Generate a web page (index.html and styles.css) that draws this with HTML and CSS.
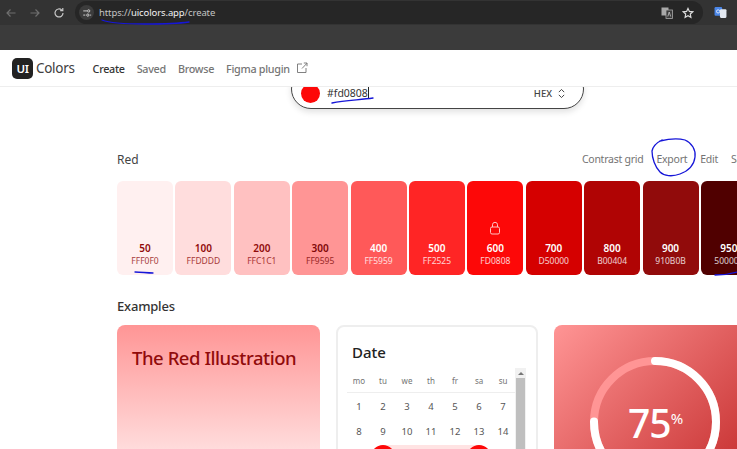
FILE: index.html
```html
<!DOCTYPE html>
<html lang="en">
<head>
    <meta charset="UTF-8">
    <meta name="viewport" content="width=device-width, initial-scale=1.0">
    <title>UI Colors</title>
    <link rel="stylesheet" href="styles.css">
</head>
<body>
    <div class="toolbar">
        <div class="toolbar-nav">
            <svg class="tool-icon" viewBox="0 0 12 12"><path d="M10.5 6H2M5.5 2.5 2 6l3.5 3.5" fill="none" stroke="#6f6f6f" stroke-width="1.2"/></svg>
            <svg class="tool-icon" viewBox="0 0 12 12"><path d="M1.5 6H10M6.5 2.5 10 6l-3.5 3.5" fill="none" stroke="#6f6f6f" stroke-width="1.2"/></svg>
            <svg class="tool-icon" viewBox="0 0 12 12"><path d="M10 6a4 4 0 1 1-1.2-2.9M9.8 1v2.6H7.2" fill="none" stroke="#c8c8c8" stroke-width="1.2"/></svg>
        </div>
        <div class="address">
            <span class="site-info">
                <svg viewBox="0 0 12 12"><path d="M1.5 3.5h4.5M1.5 8.5h2.5" fill="none" stroke="#ddd" stroke-width="1.1"/><circle cx="8" cy="3.5" r="1.4" fill="none" stroke="#ddd"/><circle cx="7" cy="8.5" r="1.4" fill="none" stroke="#ddd"/><path d="M9.5 8.5h1.5" stroke="#ddd"/></svg>
            </span>
            <span class="url">https://<b>uicolors.app</b>/create</span>
            <svg class="translate-icon" viewBox="0 0 12 12"><rect x="0.5" y="0.5" width="7" height="8" fill="#a8a8a8"/><rect x="5" y="3" width="6.5" height="8.5" fill="#3a3a3a" stroke="#a8a8a8" stroke-width="0.8"/><path d="M6.8 9.5 8.2 5l1.5 4.5" fill="none" stroke="#c8c8c8" stroke-width="0.8"/></svg>
            <svg class="star-icon" viewBox="0 0 12 12"><path d="m6 1.4 1.4 3 3.3.4-2.4 2.2.6 3.3L6 8.7l-2.9 1.6.6-3.3-2.4-2.2 3.3-.4z" fill="none" stroke="#ddd" stroke-width="1.2"/></svg>
        </div>
        <svg class="ext-icon" viewBox="0 0 12 12"><rect x="0.5" y="1" width="7" height="8" rx="1" fill="#4a86e8"/><rect x="5.5" y="3" width="6" height="8" rx="1" fill="#e4e9f2"/><circle cx="3.8" cy="5" r="1.5" fill="none" stroke="#fff" stroke-width="0.7"/></svg>
    </div>
    <div class="tabstrip"></div>

    <nav class="nav">
        <a class="logo"><span class="logo-mark">UI</span> Colors</a>
        <a class="nav-link active">Create</a>
        <a class="nav-link">Saved</a>
        <a class="nav-link">Browse</a>
        <a class="nav-link">Figma plugin
            <svg class="open-icon" viewBox="0 0 12 12"><path d="M6 2H1.5v8.5H10V6M6 6.5 11 1.2M7.8 1H11v3.2" fill="none" stroke="#737373" stroke-width="0.9"/></svg>
        </a>
    </nav>

    <main class="content">
        <div class="picker">
            <span class="picker-dot"></span>
            <span class="picker-value">#fd0808<i class="caret"></i></span>
            <span class="picker-format">HEX
                <svg viewBox="0 0 10 12"><path d="M2 4.5 5 1.5l3 3M2 7.5l3 3 3-3" fill="none" stroke="#444" stroke-width="1.1"/></svg>
            </span>
        </div>

        <div class="palette-head">
            <h2>Red</h2>
            <div class="palette-actions">
                <a>Contrast grid</a>
                <a>Export</a>
                <a>Edit</a>
                <a>Save</a>
            </div>
        </div>

        <div class="swatches">
            <div class="swatch s50"><b>50</b><span>FFF0F0</span></div>
            <div class="swatch s100"><b>100</b><span>FFDDDD</span></div>
            <div class="swatch s200"><b>200</b><span>FFC1C1</span></div>
            <div class="swatch s300"><b>300</b><span>FF9595</span></div>
            <div class="swatch s400"><b>400</b><span>FF5959</span></div>
            <div class="swatch s500"><b>500</b><span>FF2525</span></div>
            <div class="swatch s600">
                <svg class="lock" viewBox="0 0 12 14"><rect x="1.5" y="6" width="9" height="7" rx="1.5" fill="none" stroke="#ffc1c1"/><path d="M3.5 6V3.8a2.5 2.5 0 0 1 5 0V6" fill="none" stroke="#ffc1c1"/></svg>
                <b>600</b><span>FD0808</span>
            </div>
            <div class="swatch s700"><b>700</b><span>D50000</span></div>
            <div class="swatch s800"><b>800</b><span>B00404</span></div>
            <div class="swatch s900"><b>900</b><span>910B0B</span></div>
            <div class="swatch s950"><b>950</b><span>500000</span></div>
        </div>

        <h3 class="examples-title">Examples</h3>

        <div class="examples">
            <div class="card card-illustration">
                <h4>The Red Illustration</h4>
            </div>
            <div class="card card-date">
                <h4>Date</h4>
                <div class="calendar-wrap">
                    <div class="calendar">
                        <div class="weekdays">
                            <span>mo</span><span>tu</span><span>we</span><span>th</span><span>fr</span><span>sa</span><span>su</span>
                        </div>
                        <div class="days">
                            <span>1</span><span>2</span><span>3</span><span>4</span><span>5</span><span>6</span><span>7</span>
                            <span>8</span><span>9</span><span>10</span><span>11</span><span>12</span><span>13</span><span>14</span>
                        </div>
                        <div class="range">
                            <i class="range-end"></i>
                            <i class="range-end"></i>
                        </div>
                    </div>
                    <div class="scrollbar"><span class="scroll-up"></span><span class="scroll-thumb"></span></div>
                </div>
            </div>
            <div class="card card-progress">
                <svg class="ring" viewBox="0 0 132 132">
                    <circle cx="66" cy="66" r="61" fill="none" stroke="#ff9595" stroke-width="8"/>
                    <circle cx="66" cy="66" r="61" fill="none" stroke="#fff" stroke-width="8" stroke-linecap="round" stroke-dasharray="287.5 400" transform="rotate(-90 66 66)"/>
                </svg>
                <div class="progress-value">75<sup>%</sup></div>
            </div>
        </div>
    </main>

    <!-- pen marks drawn on top of the screenshot -->
    <svg class="ink" viewBox="0 0 737 449">
        <path d="M102 20C112 24 130 24 145 24S175 24 189 22"/>
        <path d="M332 103C345 100 360 100 373 98"/>
        <path d="M660 141C668 139 678 138 685 140C692 143 696 150 695 157C694 166 688 171 680 174C672 177 664 176 660 172C655 167 652 158 652 151C653 146 656 143 662 140"/>
        <path d="M135 272C141 272 147 273 153 273"/>
        <path d="M715 275C723 275 730 274 737 272"/>
    </svg>
</body>
</html>
```

FILE: styles.css
```css
* {
    box-sizing: border-box;
}

html, body {
    height: 100%;
    margin: 0;
    overflow: hidden;
    background: #fff;
}

body {
    position: relative;
    font-family: "Noto Sans", "Open Sans", sans-serif;
    color: #333;
}

/* browser chrome */
.toolbar {
    display: flex;
    align-items: center;
    height: 25px;
    padding-left: 5px;
    background: #333;
}

.toolbar-nav {
    display: flex;
    gap: 12px;
    width: 70px;
}

.tool-icon {
    width: 12px;
    height: 12px;
}

.address {
    display: flex;
    align-items: center;
    width: 628px;
    height: 23px;
    padding: 0 9px 0 4px;
    border-radius: 12px;
    background: #262626;
}

.site-info {
    display: flex;
    align-items: center;
    justify-content: center;
    width: 15px;
    height: 15px;
    margin-right: 5px;
    border-radius: 50%;
    background: #3c3c3c;
}

.site-info svg {
    width: 10px;
    height: 10px;
}

.url {
    flex: 1;
    font-size: 9.5px;
    letter-spacing: -0.1px;
    color: #c4c4c4;
}

.url b {
    font-weight: 400;
    color: #f2f2f2;
}

.translate-icon {
    width: 12px;
    height: 12px;
    margin-right: 9px;
}

.star-icon {
    width: 12px;
    height: 12px;
}

.ext-icon {
    width: 13px;
    height: 13px;
    margin-left: 11px;
}

.tabstrip {
    height: 25px;
    background: #3b3b3b;
}

/* site nav */
.nav {
    position: relative;
    z-index: 2;
    display: flex;
    align-items: center;
    height: 37px;
    padding-left: 12px;
    background: #fff;
    border-bottom: 1px solid #eee;
    font-size: 10.8px;
    letter-spacing: -0.3px;
}

.logo {
    display: flex;
    align-items: center;
    gap: 3px;
    margin-right: 18px;
    font-size: 13.5px;
    color: #404040;
}

.logo-mark {
    display: flex;
    align-items: center;
    justify-content: center;
    width: 21px;
    height: 21px;
    border-radius: 5px;
    background: #222;
    color: #fff;
    font-size: 11.5px;
    font-weight: 600;
}

.nav-link {
    display: flex;
    align-items: center;
    margin-right: 12px;
    font-weight: 500;
    color: #757575;
}

.nav-link.active {
    color: #333;
}

.open-icon {
    width: 12px;
    height: 12px;
    margin-left: 6px;
}

/* page body, scrolled a little so the picker is cut off by the nav */
.content {
    padding-left: 117px;
}

.picker {
    display: flex;
    align-items: center;
    width: 293px;
    height: 40px;
    margin-top: -18px;
    margin-left: 174px;
    padding: 8px 17px 0 9px;
    border: 1px solid #444;
    border-radius: 20px;
    background: #fff;
    box-shadow: 0 3px 6px rgba(0, 0, 0, 0.12);
    font-size: 10.5px;
}

.picker-dot {
    width: 19px;
    height: 19px;
    margin-right: 7px;
    border-radius: 50%;
    background: #fd0808;
}

.picker-value {
    flex: 1;
    color: #333;
}

.caret {
    display: inline-block;
    width: 1px;
    height: 12px;
    vertical-align: -2px;
    background: #222;
}

.picker-format {
    display: flex;
    align-items: center;
    gap: 5px;
    font-size: 9.5px;
    font-weight: 500;
    color: #444;
}

.picker-format svg {
    width: 9px;
    height: 11px;
}

.palette-head {
    display: flex;
    justify-content: space-between;
    align-items: center;
    width: 636px;
    height: 20px;
    margin-top: 40px;
}

.palette-head h2 {
    margin: 0;
    font-size: 12px;
    font-weight: 400;
    color: #444;
}

.palette-actions {
    display: flex;
    gap: 13px;
    font-size: 10.5px;
    letter-spacing: -0.25px;
    color: #737373;
}

.swatches {
    display: flex;
    gap: 2.4px;
    margin-top: 12px;
}

.swatch {
    flex: none;
    display: flex;
    flex-direction: column;
    align-items: center;
    justify-content: flex-end;
    width: 56px;
    height: 94px;
    padding-bottom: 8px;
    border-radius: 6px;
    font-size: 10px;
}

.swatch b {
    font-weight: 600;
    line-height: 13px;
}

.swatch span {
    font-size: 8.5px;
    line-height: 12px;
    opacity: 0.8;
}

.lock {
    width: 12px;
    height: 14px;
    margin-bottom: 7px;
}

.s50 { background: #fff0f0; color: #910b0b; }
.s100 { background: #ffdddd; color: #910b0b; }
.s200 { background: #ffc1c1; color: #910b0b; }
.s300 { background: #ff9595; color: #800808; }
.s400 { background: #ff5959; color: #fff; }
.s500 { background: #ff2525; color: #fff; }
.s600 { background: #fd0808; color: #fff; }
.s700 { background: #d50000; color: #fff; }
.s800 { background: #b00404; color: #fff; }
.s900 { background: #910b0b; color: #fff; }
.s950 { background: #500000; color: #fff; }

.examples-title {
    margin: 23px 0 10px;
    font-size: 13px;
    line-height: 17px;
    font-weight: 500;
    letter-spacing: -0.2px;
    color: #333;
}

.examples {
    display: flex;
    gap: 16px;
}

.card {
    flex: none;
    position: relative;
    width: 202px;
    height: 200px;
    border-radius: 8px;
}

.card h4 {
    margin: 0;
    font-weight: 500;
}

.card-illustration {
    width: 203px;
    padding: 20px 15px;
    background: linear-gradient(to bottom, #ff9595, #fff0f0 80%);
}

.card-illustration h4 {
    font-size: 18.5px;
    line-height: 26px;
    letter-spacing: -0.45px;
    color: #910b0b;
}

.card-date {
    padding: 15px 10px 0 9px;
    border: 2px solid #eee;
    background: #fff;
}

.card-date h4 {
    padding-left: 5px;
    font-size: 15px;
    line-height: 20px;
    color: #222;
}

.calendar-wrap {
    display: flex;
    margin-top: 6px;
}

.calendar {
    width: 169px;
}

.weekdays {
    display: grid;
    grid-template-columns: repeat(7, 1fr);
    height: 25px;
    border-bottom: 1px solid #eee;
    font-size: 8px;
    line-height: 26px;
    text-align: center;
    color: #737373;
}

.days {
    display: grid;
    grid-template-columns: repeat(7, 1fr);
    grid-auto-rows: 25px;
    padding-top: 1px;
    font-size: 9.5px;
    line-height: 25px;
    text-align: center;
    color: #555;
}

.range {
    display: flex;
    justify-content: space-between;
    height: 24px;
    margin: 1px 24px 0;
    background: #ffe3e3;
    border-radius: 12px;
}

.range-end {
    width: 24px;
    height: 24px;
    border-radius: 50%;
    background: #fd0808;
}

.scrollbar {
    display: flex;
    flex-direction: column;
    align-items: center;
    width: 11px;
    height: 90px;
    background: #f1f1f1;
}

.scroll-up {
    width: 0;
    height: 0;
    margin: 4px 0 3px;
    border: 3px solid transparent;
    border-top: 0;
    border-bottom: 3px solid #777;
}

.scroll-thumb {
    width: 9px;
    flex: 1;
    background: #bfbfbf;
}

.card-progress {
    display: flex;
    justify-content: center;
    padding-top: 31px;
    background: linear-gradient(135deg, #ff9595, #bc1d1d);
}

.ring {
    width: 132px;
    height: 132px;
}

.progress-value {
    position: absolute;
    top: 73px;
    left: 74px;
    font-size: 39px;
    font-weight: 500;
    line-height: 50px;
    letter-spacing: -1px;
    color: #fff;
}

.progress-value sup {
    position: relative;
    font-size: 15px;
    font-weight: 400;
    line-height: 0;
    vertical-align: 14px;
}

/* pen marks */
.ink {
    position: absolute;
    top: 0;
    left: 0;
    z-index: 3;
    width: 737px;
    height: 449px;
    pointer-events: none;
}

.ink path {
    fill: none;
    stroke: #1616d8;
    stroke-width: 1.3;
    stroke-linecap: round;
}
```
